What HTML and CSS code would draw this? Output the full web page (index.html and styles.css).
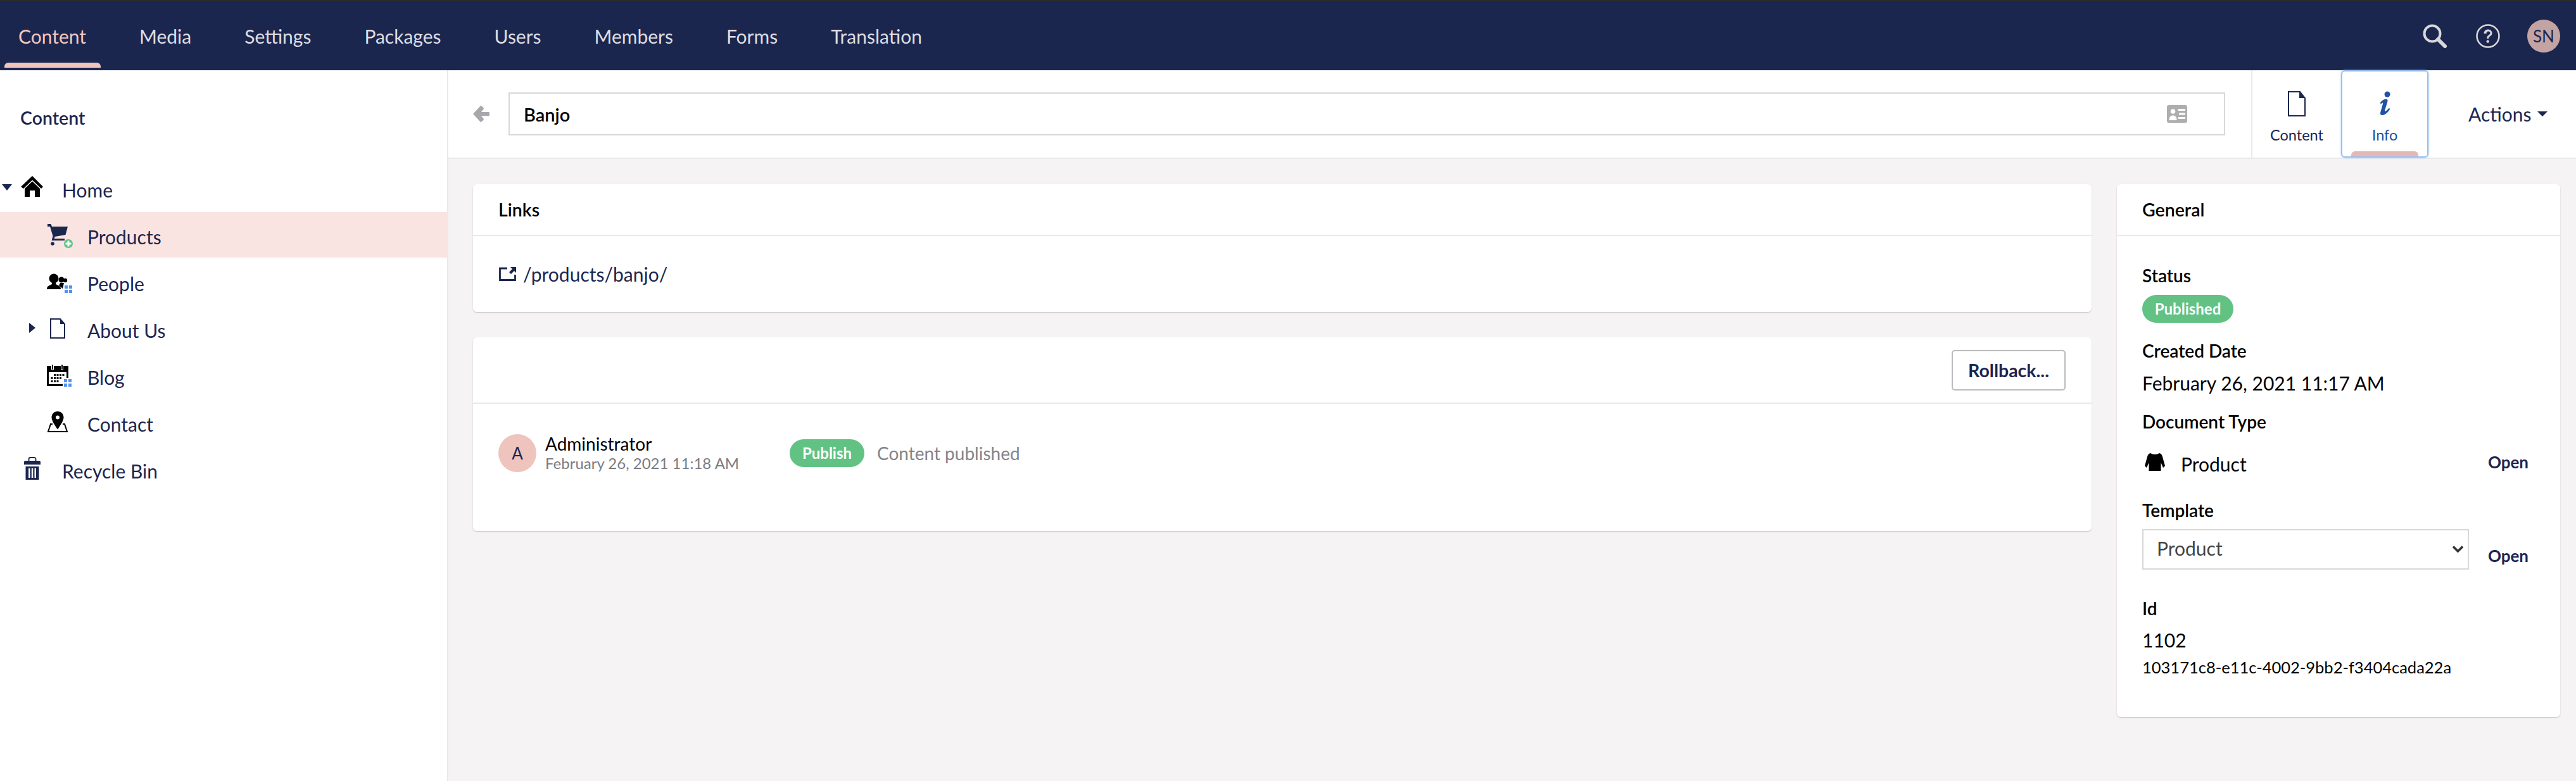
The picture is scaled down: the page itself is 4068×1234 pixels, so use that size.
FILE: index.html
```html
<!DOCTYPE html>
<html lang="en">
<head>
<meta charset="UTF-8">
<title>Banjo - Content</title>
<link rel="stylesheet" href="styles.css">
</head>
<body>
    <header class="topbar">
        <nav class="sections">
            <a class="section active">Content</a>
            <a class="section">Media</a>
            <a class="section">Settings</a>
            <a class="section">Packages</a>
            <a class="section">Users</a>
            <a class="section">Members</a>
            <a class="section">Forms</a>
            <a class="section">Translation</a>
        </nav>
        <div class="tools">
            <svg class="tool" width="38" height="38" viewBox="0 0 38 38"><circle cx="15" cy="15" r="12.5" fill="none" stroke="currentColor" stroke-width="4"/><path d="M24 24l11 11" stroke="currentColor" stroke-width="6" stroke-linecap="round"/></svg>
            <svg class="tool" width="38" height="38" viewBox="0 0 38 38"><circle cx="19" cy="19" r="17.5" fill="none" stroke="currentColor" stroke-width="2.6"/><path d="M12.500 15c0-4 3-6.500 6.500-6.500s6.500 2.300 6.500 5.800c0 3-2 4.200-3.700 5.400-1.300.9-1.600 1.600-1.600 3.300h-3c0-2.800.7-4 2.600-5.300 1.700-1.200 2.700-1.900 2.700-3.400 0-1.700-1.200-2.900-3-2.900s-3 1.200-3 3.600z" fill="currentColor"/><circle cx="18.700" cy="27.500" r="2.200" fill="currentColor"/></svg>
            <div class="user-badge">SN</div>
        </div>
    </header>

    <div class="app">
        <aside class="sidebar">
            <h1 class="sidebar-title">Content</h1>
            <ul class="tree">
                <li class="node root">
                    <span class="caret"><svg width="16" height="10" viewBox="0 0 16 10"><path d="M0 0h16L8 10z" fill="#1b264f"/></svg></span>
                    <svg class="node-icon" width="48" height="48" viewBox="0 0 48 48"><path d="M18 3l17 17-3 3L18 9.500 4 23l-4-3z"/><path d="M18 11.500L30 23v13h-8V26h-8v10H6V23z"/></svg>
                    <span>Home</span>
                </li>
                <li class="node child selected">
                    <span class="caret"></span>
                    <svg class="node-icon" width="48" height="48" viewBox="0 0 48 48"><path d="M2 5h5.500l1.500 4h25l-3.500 13-17 3-.8 3H29v3H8.500l2-7L6 9H2z" fill="#1b264f"/><circle cx="10" cy="36" r="2.800" fill="#1b264f"/><circle cx="35" cy="36" r="7" fill="#61c284"/><path d="M33.500 31.500h3v3h3v3h-3v3h-3v-3h-3v-3h3z" fill="#fff"/></svg>
                    <span>Products</span>
                </li>
                <li class="node child">
                    <span class="caret"></span>
                    <svg class="node-icon" width="48" height="48" viewBox="0 0 48 48"><circle cx="12" cy="17" r="7.500"/><path d="M1 34c0-3 1-5 4-6l4-2v-4h6v4l4 2c3 1 4 3 4 6z"/><circle cx="24" cy="19" r="4.500"/><path d="M20 28l2-4h6l-2 9z"/><circle cx="30" cy="20" r="3.200"/><path d="M29 28h5v5h-5zM36 28h5v5h-5zM29 35h5v5h-5zM36 35h5v5h-5z" fill="#5393f0"/></svg>
                    <span>People</span>
                </li>
                <li class="node child">
                    <span class="caret side"><svg width="10" height="16" viewBox="0 0 10 16"><path d="M0 0l10 8-10 8z" fill="#1b264f"/></svg></span>
                    <svg class="node-icon" width="48" height="48" viewBox="0 0 48 48"><path d="M7 7h15l7 8v22H7z" fill="none" stroke="#1b264f" stroke-width="2"/><path d="M22 7v8h7z" fill="#1b264f"/></svg>
                    <span>About Us</span>
                </li>
                <li class="node child">
                    <span class="caret"></span>
                    <svg class="node-icon" width="48" height="48" viewBox="0 0 48 48"><path d="M1 7h34v19l-7 13H1z"/><path d="M4 17h28v9l-5 10H4z" fill="#fff"/><path d="M8.500 5h3v8h-3zM23.500 5h3v8h-3z" stroke="#fff" stroke-width="1"/><path d="M12 20h3v3h-3zM16.500 20h3v3h-3zM21 20h3v3h-3zM25.500 20h3v3h-3zM7.500 25h3v3h-3zM12 25h3v3h-3zM16.500 25h3v3h-3zM21 25h3v3h-3zM7.500 30h3v3h-3zM12 30h3v3h-3zM16.500 30h3v3h-3z"/><path d="M26 26h16v16H26z" fill="#fff"/><path d="M28 28h5v5h-5zM35 28h5v5h-5zM28 35h5v5h-5zM35 35h5v5h-5z" fill="#5393f0"/></svg>
                    <span>Blog</span>
                </li>
                <li class="node child">
                    <span class="caret"></span>
                    <svg class="node-icon" width="48" height="48" viewBox="0 0 48 48"><path d="M10 25H7L3 37h30l-4-12h-3" fill="none" stroke="#000" stroke-width="2"/><path d="M18 5c5.500 0 9.500 4 9.500 9.500 0 5-5.500 13-9.500 19-4-6-9.500-14-9.500-19C8.500 9 12.500 5 18 5z"/><circle cx="18" cy="14.500" r="3" fill="#fff"/></svg>
                    <span>Contact</span>
                </li>
                <li class="node root">
                    <span class="caret"></span>
                    <svg class="node-icon" width="48" height="48" viewBox="0 0 48 48"><path d="M12.500 9V6.500a2.500 2.500 0 012.500-2.500h6a2.500 2.500 0 012.500 2.500V9" fill="none" stroke="#1b264f" stroke-width="1.800"/><path d="M7 9h22a2 2 0 012 2v4H5v-4a2 2 0 012-2zM7.500 18h21v21h-21z" fill="#1b264f"/><path d="M12 21h2.500v15H12zM16.800 21h2.500v15h-2.500zM21.500 21H24v15h-2.500z" fill="#fff"/></svg>
                    <span>Recycle Bin</span>
                </li>
            </ul>
        </aside>

        <main class="editor">
            <div class="toolbar">
                <svg class="back" width="26" height="26" viewBox="0 0 26 26"><path d="M12 0c1 0 5 3 5 5l-4 5h12a1 1 0 011 1v4a1 1 0 01-1 1H13l4 5c0 2-4 5-5 5L0 13z" fill="#a8a8ac"/></svg>
                <div class="name-box">
                    <span class="name">Banjo</span>
                    <svg width="32" height="28" viewBox="0 0 32 28"><rect width="32" height="28" rx="3" fill="#aeaeae"/><circle cx="9.500" cy="10" r="3.800" fill="#fff"/><path d="M3.500 24c0-5 2-7.500 6-7.500s6 2.500 6 7.500zM17.500 6H29v3H17.500zM19 12.500h10v3H19zM18 19h11v3H18z" fill="#fff"/></svg>
                </div>
                <div class="apps">
                    <div class="app-tab">
                        <svg width="28" height="40" viewBox="0 0 28 40"><path d="M1 1h18l8 10v28H1z" fill="none" stroke="#1b264f" stroke-width="2"/><path d="M18 1v10h9z" fill="#1b264f"/></svg>
                        <span>Content</span>
                    </div>
                    <div class="app-tab current">
                        <svg width="22" height="40" viewBox="0 0 22 40"><circle cx="15" cy="5" r="4.500" fill="#2152a3"/><path d="M4 18c2-3 6-5.500 9-5.500 2.500 0 3 2 2.200 4.500l-4 13c-.5 2 1 2 2.300 1 1.500-1 2.800-2.500 4-4.200l1.800 1.200c-2.500 4.500-7 9.500-11.500 10-3 .3-4.500-1.500-3.500-5l3.700-13c.4-1.500-.2-2-1.200-1.200-.8.600-1.500 1.300-2.300 2z" fill="#2152a3"/></svg>
                        <span>Info</span>
                    </div>
                </div>
                <div class="actions">Actions <i class="actions-caret"></i></div>
            </div>

            <div class="workspace">
                <div class="col-main">
                    <section class="card">
                        <div class="card-head">Links</div>
                        <div class="links-body">
                            <svg width="27" height="22" viewBox="0 0 27 22"><path d="M13 2H1.500v18.500h24V12" fill="none" stroke="#1b264f" stroke-width="2.800"/><path d="M18 0h9v9l-3-3-5 5-3-3 5-5z" fill="#1b264f"/></svg>
                            <a class="link">/products/banjo/</a>
                        </div>
                    </section>
                    <section class="card">
                        <div class="history-head"><button class="btn-rollback">Rollback...</button></div>
                        <div class="history-row">
                            <div class="avatar">A</div>
                            <div class="who">
                                <div class="who-name">Administrator</div>
                                <div class="who-date">February 26, 2021 11:18 AM</div>
                            </div>
                            <span class="pill pill-publish">Publish</span>
                            <span class="history-text">Content published</span>
                        </div>
                    </section>
                </div>

                <aside class="card col-side">
                    <div class="card-head">General</div>
                    <div class="general">
                        <div class="label first">Status</div>
                        <span class="pill pill-status">Published</span>
                        <div class="label created">Created Date</div>
                        <div class="value date">February 26, 2021 11:17 AM</div>
                        <div class="label doctype">Document Type</div>
                        <div class="type-row">
                            <svg width="34" height="28" viewBox="0 0 34 28"><path d="M10 0c2 1 4 2 7 2s5-1 7-2c2 .5 3.500 1.500 4.500 4L33 20l-3 3-3.500-8v13h-19V15L4 23l-3-3L5.500 4C6.500 1.500 8 .5 10 0z"/></svg>
                            <span class="type-name">Product</span>
                            <a class="open">Open</a>
                        </div>
                        <div class="label template">Template</div>
                        <div class="template-row">
                            <div class="select-wrap">
                                <select class="template-select"><option>Product</option></select>
                                <svg class="chevron" width="19" height="13" viewBox="0 0 19 13"><path d="M2 2.500l7.500 7.500L17 2.500" fill="none" stroke="#333" stroke-width="3.600"/></svg>
                            </div>
                            <a class="open">Open</a>
                        </div>
                        <div class="label id-label">Id</div>
                        <div class="value id-value">1102</div>
                        <div class="guid">103171c8-e11c-4002-9bb2-f3404cada22a</div>
                    </div>
                </aside>
            </div>
        </main>
    </div>
</body>
</html>
```

FILE: styles.css
```css
* {
    box-sizing: border-box;
}

body {
    margin: 0;
    font-family: Lato, "Open Sans", sans-serif;
    color: #000;
    background: #f5f3f4;
}

/* top bar */
.topbar {
    height: 111px;
    display: flex;
    align-items: center;
    justify-content: space-between;
    background: #1b264f;
    border-top: 2px solid #2b2b2b;
}

.sections {
    display: flex;
    gap: 84px;
    padding-left: 29px;
}

.section {
    position: relative;
    font-size: 30px;
    line-height: 36px;
    color: #dedde2;
}

.section.active {
    color: #f5c7bf;
}

.section.active::after {
    content: "";
    position: absolute;
    left: -22px;
    right: -23px;
    top: 60px;
    height: 8px;
    background: #eec4bd;
    border-radius: 6px 6px 0 0;
}

.tools {
    display: flex;
    align-items: center;
    padding-right: 25px;
}

.tool {
    color: #d8d7d9;
    margin-right: 46px;
}

.tool + .tool {
    margin-right: 43px;
}

.user-badge {
    width: 52px;
    height: 52px;
    border-radius: 50%;
    background: #c4a3a3;
    color: #1b264f;
    font-size: 26px;
    line-height: 52px;
    text-align: center;
}

/* layout */
.app {
    display: flex;
    min-height: 1123px;
}

.sidebar {
    width: 708px;
    flex: none;
    background: #fff;
    border-right: 2px solid #e9e9eb;
}

.sidebar-title {
    margin: 0;
    padding: 57px 0 0 32px;
    font-size: 28.5px;
    line-height: 36px;
    font-weight: 600;
    color: #1b264f;
}

.tree {
    list-style: none;
    margin: 57px 0 0;
    padding: 0;
}

.node {
    height: 72px;
    margin-bottom: 2px;
    padding-top: 6px;
    display: flex;
    align-items: center;
    font-size: 30px;
    color: #1b264f;
}

.node.root {
    padding-left: 3px;
}

.node.child {
    padding-left: 43px;
}

.node.selected {
    background: #f9e4e1;
}

.caret {
    width: 30px;
    flex: none;
    display: flex;
    margin-top: -8px;
}

.caret.side {
    padding-left: 3px;
}

.node-icon {
    flex: none;
    margin-right: 17px;
    margin-top: -2px;
}

/* editor header */
.editor {
    flex: 1;
    min-width: 0;
}

.toolbar {
    height: 140px;
    display: flex;
    align-items: center;
    padding-left: 39px;
    background: #fff;
    border-bottom: 2px solid #e9e9eb;
}

.back {
    flex: none;
    margin-right: 30px;
}

.name-box {
    flex: 1;
    height: 68px;
    display: flex;
    align-items: center;
    justify-content: space-between;
    padding: 0 58px 0 22px;
    border: 2px solid #d8d7d9;
}

.name {
    font-size: 29px;
    font-weight: 600;
}

.apps {
    display: flex;
    align-self: stretch;
    margin-left: 41px;
    border-left: 2px solid #e9e9eb;
}

.app-tab {
    position: relative;
    width: 140px;
    display: flex;
    flex-direction: column;
    align-items: center;
    padding-top: 33px;
    font-size: 23.5px;
    line-height: 30px;
    color: #1b264f;
}

.app-tab span {
    margin-top: 14px;
}

.app-tab.current {
    width: 138px;
    color: #2152a3;
    border: 2px solid #97c2f2;
    box-shadow: 0 0 3px #97c2f2;
    border-radius: 6px;
    padding-top: 31px;
}

.app-tab.current::after {
    content: "";
    position: absolute;
    left: 14px;
    right: 14px;
    bottom: 0;
    height: 8px;
    border-radius: 6px 6px 0 0;
    background: #e4b9b5;
}

.actions {
    width: 233px;
    padding-left: 63px;
    font-size: 30px;
    color: #1b264f;
    display: flex;
    align-items: center;
}

.actions-caret {
    width: 0;
    height: 0;
    margin-left: 10px;
    border-left: 8px solid transparent;
    border-right: 8px solid transparent;
    border-top: 8px solid #1b264f;
}

/* cards */
.workspace {
    display: flex;
    align-items: flex-start;
    gap: 40px;
    padding: 40px 25px 0 39px;
}

.col-main {
    flex: 1;
    min-width: 0;
}

.col-main .card + .card {
    margin-top: 40px;
}

.col-side {
    width: 700px;
    flex: none;
}

.card {
    background: #fff;
    border-radius: 6px;
    box-shadow: 0 1px 2px rgba(0, 0, 0, 0.2);
}

.card-head {
    height: 82px;
    padding: 0 40px;
    display: flex;
    align-items: center;
    font-size: 28.5px;
    font-weight: 600;
    border-bottom: 2px solid #e9e9eb;
}

.links-body {
    height: 120px;
    display: flex;
    align-items: center;
    padding-left: 41px;
    gap: 11px;
}

.link {
    font-size: 30px;
    color: #1b264f;
}

.history-head {
    height: 105px;
    display: flex;
    align-items: center;
    justify-content: flex-end;
    padding-right: 41px;
    border-bottom: 2px solid #e9e9eb;
}

.btn-rollback {
    width: 180px;
    height: 64px;
    background: #fff;
    border: 2px solid #bbbbc0;
    border-radius: 5px;
    font-family: inherit;
    font-size: 28.5px;
    font-weight: 700;
    color: #1b264f;
}

.history-row {
    height: 201px;
    padding: 0 0 46px 40px;
    display: flex;
    align-items: center;
}

.avatar {
    width: 60px;
    height: 60px;
    flex: none;
    border-radius: 50%;
    background: #eec4bd;
    color: #1b264f;
    text-align: center;
    font-size: 26px;
    line-height: 60px;
}

.who {
    width: 400px;
    flex: none;
    padding-left: 14px;
}

.who-name {
    font-size: 28px;
    line-height: 30px;
}

.who-date {
    margin-top: 2px;
    font-size: 24px;
    line-height: 28px;
    color: #7b7b80;
}

.pill {
    display: inline-block;
    height: 44px;
    border-radius: 22px;
    background: #61c284;
    color: #fff;
    font-size: 24px;
    font-weight: 700;
    line-height: 44px;
    text-align: center;
}

.pill-publish {
    width: 118px;
    margin-right: 20px;
}

.pill-status {
    width: 144px;
    display: block;
    margin-top: 14px;
}

.history-text {
    font-size: 28px;
    color: #848489;
}

/* general panel */
.general {
    padding: 45px 50px 63px 40px;
}

.label {
    font-size: 28px;
    font-weight: 600;
    line-height: 34px;
}

.label.created {
    margin-top: 27px;
}

.label.doctype {
    margin-top: 26px;
}

.label.template {
    margin-top: 38px;
}

.label.id-label {
    margin-top: 44px;
}

.value {
    font-size: 30px;
    line-height: 36px;
}

.value.date {
    margin-top: 16px;
}

.value.id-value {
    margin-top: 15px;
}

.type-row {
    display: flex;
    align-items: center;
    margin-top: 26px;
    padding-left: 3px;
    line-height: 36px;
}

.type-name {
    flex: 1;
    padding: 6px 0 0 24px;
    font-size: 30px;
}

.open {
    font-size: 26px;
    font-weight: 700;
    color: #1b264f;
}

.template-row {
    display: flex;
    align-items: flex-end;
    justify-content: space-between;
    margin-top: 13px;
}

.template-row .open {
    padding-bottom: 6px;
}

.select-wrap {
    position: relative;
    width: 516px;
}

.template-select {
    display: block;
    width: 100%;
    height: 64px;
    padding: 0 0 4px 21px;
    appearance: none;
    background: #fff;
    border: 2px solid #d8d7d9;
    border-radius: 0;
    font-family: inherit;
    font-size: 30px;
    color: #444;
}

.chevron {
    position: absolute;
    right: 8px;
    top: 25px;
}

.guid {
    margin-top: 9px;
    font-size: 25.5px;
    line-height: 32px;
}
```
